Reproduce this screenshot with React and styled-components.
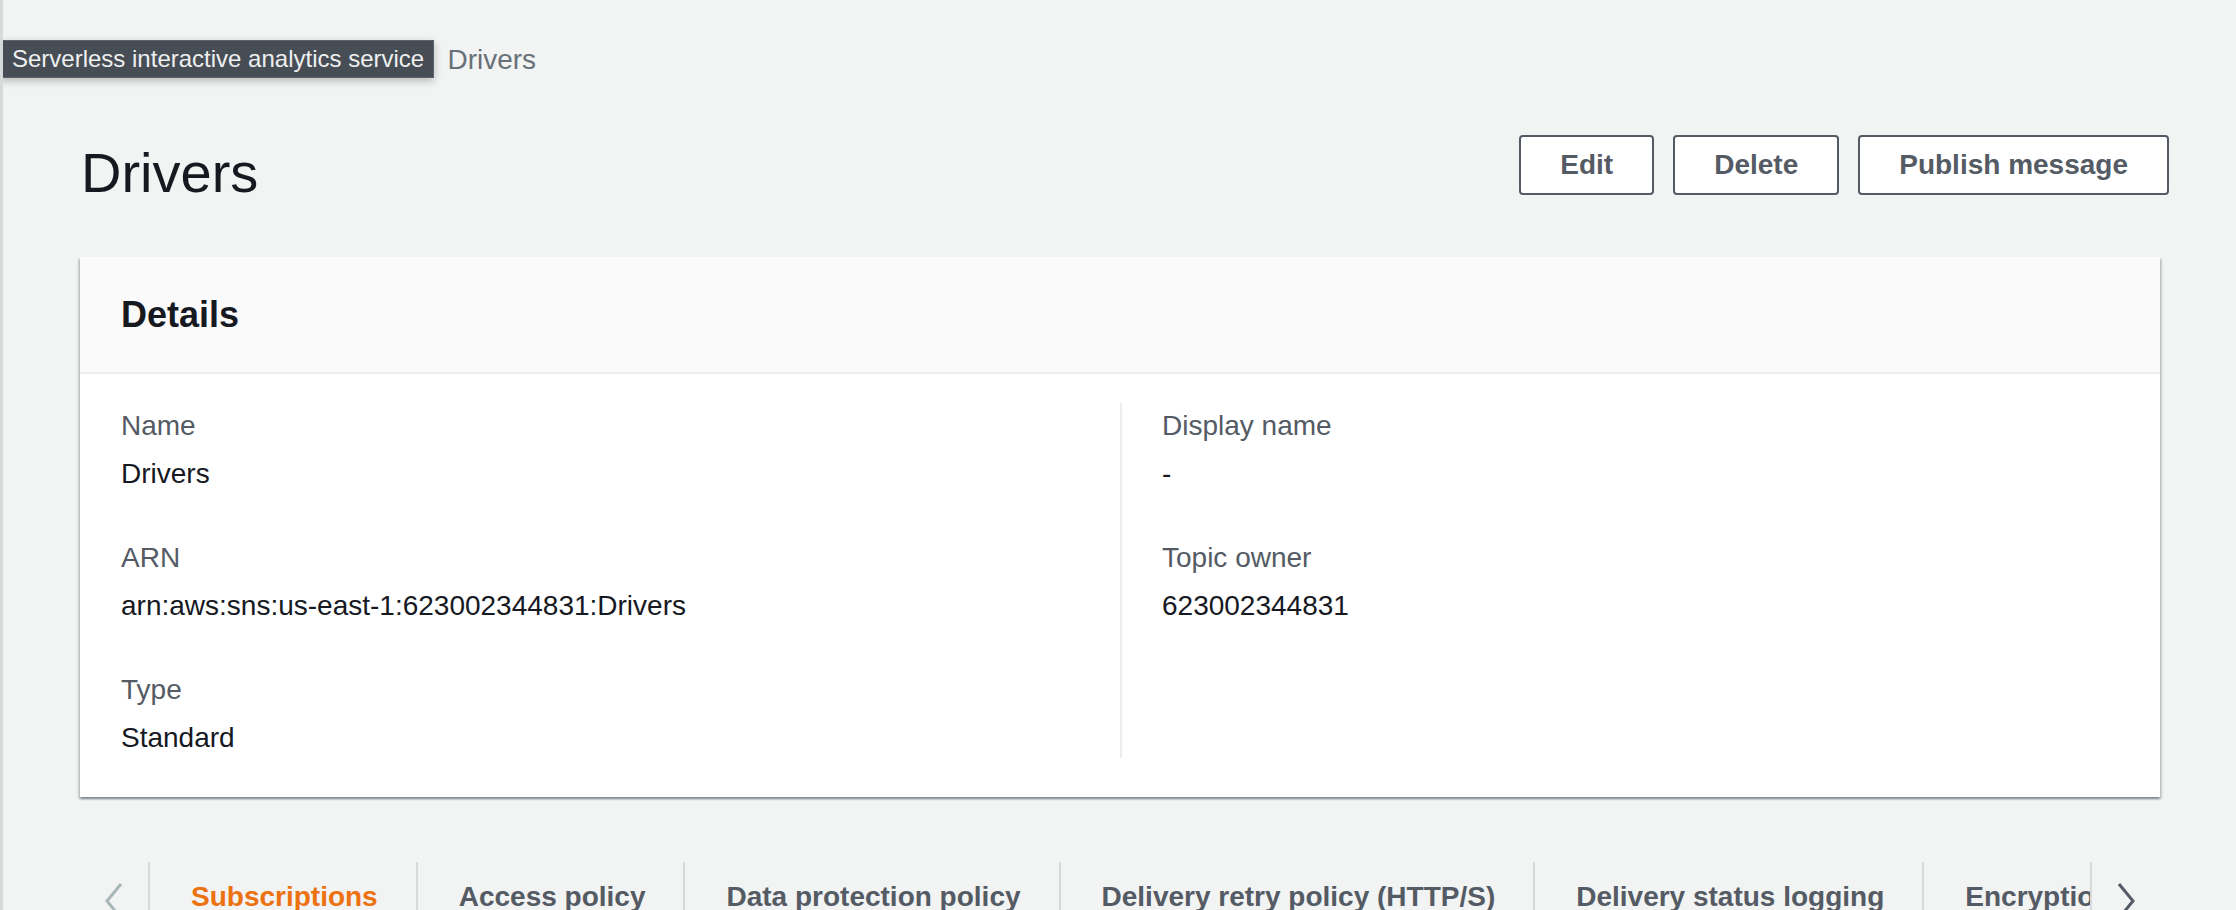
import React from 'react';
import styled, { createGlobalStyle } from 'styled-components';

const GlobalStyle = createGlobalStyle`
  html, body {
    margin: 0;
    padding: 0;
    background: #f2f3f3;
  }
  body {
    font-family: "Liberation Sans", Arial, sans-serif;
    color: #16191f;
  }
`;

const Page = styled.div`
  position: relative;
  min-height: 910px;
  box-sizing: border-box;
  background: #f2f3f3;
  border-left: 3px solid #d5dbdb;
  padding: 40px 67px 0 77px;
  overflow: hidden;
`;

const Tooltip = styled.div`
  position: absolute;
  left: -3px;
  top: 40px;
  width: 434px;
  height: 38px;
  box-sizing: border-box;
  display: flex;
  align-items: center;
  padding-left: 11px;
  background: #474d55;
  border: 1px solid #5c636c;
  color: #eef0f0;
  font-size: 24px;
  white-space: nowrap;
  box-shadow: 0 3px 8px rgba(0, 0, 0, 0.25);
  z-index: 2;
`;

const Breadcrumbs = styled.nav`
  display: flex;
  align-items: center;
  gap: 24px;
  height: 40px;
  font-size: 28px;
  color: #687078;
`;

const Crumb = styled.span`
  color: ${(p) => (p.$current ? '#687078' : '#0073bb')};
  white-space: nowrap;
`;

const Separator = styled.span`
  display: flex;
  width: 12px;
  color: #687078;
`;

const HeaderRow = styled.div`
  display: flex;
  justify-content: space-between;
  align-items: flex-start;
  margin-top: 55px;
`;

const Title = styled.h1`
  margin: 0 0 0 1px;
  font-size: 56px;
  line-height: 76px;
  font-weight: 400;
  color: #16191f;
`;

const Actions = styled.div`
  display: flex;
  gap: 19px;
`;

const Button = styled.button`
  height: 60px;
  padding: 0 39px;
  background: #ffffff;
  border: 2px solid #545b64;
  border-radius: 4px;
  color: #545b64;
  font-family: "Liberation Sans", Arial, sans-serif;
  font-size: 28px;
  font-weight: 700;
  cursor: pointer;
`;

const Card = styled.section`
  margin: 46px 9px 0 0;
  background: #ffffff;
  box-shadow: 0 2px 2px 0 rgba(0, 28, 36, 0.3),
    2px 2px 2px 0 rgba(0, 28, 36, 0.15),
    -2px 2px 2px 0 rgba(0, 28, 36, 0.15);
`;

const CardHeader = styled.div`
  height: 115px;
  display: flex;
  align-items: center;
  padding: 0 41px;
  background: #fafafa;
  border-bottom: 2px solid #eaeded;
`;

const CardTitle = styled.h2`
  margin: 0;
  font-size: 36px;
  line-height: 44px;
  font-weight: 700;
  color: #16191f;
`;

const CardBody = styled.div`
  display: grid;
  grid-template-columns: 1fr 1fr;
  padding: 29px 41px 39px;
`;

const Column = styled.div`
  display: flex;
  flex-direction: column;
  gap: 44px;
  padding-top: 3px;
  padding-left: ${(p) => (p.$divided ? '40px' : '0')};
  border-left: ${(p) => (p.$divided ? '2px solid #eaeded' : 'none')};
  min-height: 355px;
  box-sizing: border-box;
`;

const Field = styled.div`
  display: flex;
  flex-direction: column;
  gap: 8px;
`;

const Label = styled.div`
  font-size: 28px;
  line-height: 40px;
  color: #545b64;
`;

const Value = styled.div`
  font-size: 28px;
  line-height: 40px;
  color: #16191f;
`;

const TabsBar = styled.div`
  display: flex;
  align-items: stretch;
  margin: 65px 9px 0 0;
  height: 70px;
`;

const ScrollButton = styled.button`
  width: 68px;
  display: flex;
  justify-content: center;
  padding: 20px 0 0;
  background: none;
  border: none;
  color: ${(p) => (p.$disabled ? '#aab7b8' : '#545b64')};
  cursor: pointer;
`;

const TabList = styled.div`
  flex: 1;
  display: flex;
  overflow: hidden;
  border-left: 2px solid #d5dbdb;
  border-right: 2px solid #d5dbdb;
`;

const Tab = styled.div`
  flex-shrink: 0;
  padding: 15px 38px 0 41px;
  font-size: 28px;
  line-height: 40px;
  font-weight: 700;
  white-space: nowrap;
  color: ${(p) => (p.$active ? '#ec7211' : '#545b64')};
  & + & {
    border-left: 2px solid #d5dbdb;
  }
`;

const Chevron = ({ dir }) => (
  <svg width="20" height="38" viewBox="0 0 20 38" fill="none" stroke="currentColor" strokeWidth="3">
    {dir === 'left' ? <polyline points="17,2 3,19 17,36" /> : <polyline points="3,2 17,19 3,36" />}
  </svg>
);

const SmallChevron = () => (
  <svg width="12" height="20" viewBox="0 0 12 20" fill="none" stroke="currentColor" strokeWidth="2.5">
    <polyline points="2,2 10,10 2,18" />
  </svg>
);

const leftFields = [
  { label: 'Name', value: 'Drivers' },
  { label: 'ARN', value: 'arn:aws:sns:us-east-1:623002344831:Drivers' },
  { label: 'Type', value: 'Standard' },
];

const rightFields = [
  { label: 'Display name', value: '-' },
  { label: 'Topic owner', value: '623002344831' },
];

const tabs = [
  'Subscriptions',
  'Access policy',
  'Data protection policy',
  'Delivery retry policy (HTTP/S)',
  'Delivery status logging',
  'Encryption',
  'Tags',
  'Integrations',
];

export default function App() {
  return (
    <>
      <GlobalStyle />
      <Page>
        <Tooltip>Serverless interactive analytics service</Tooltip>

        <Breadcrumbs>
          <Crumb>Amazon SNS</Crumb>
          <Separator><SmallChevron /></Separator>
          <Crumb>Topics</Crumb>
          <Separator><SmallChevron /></Separator>
          <Crumb $current>Drivers</Crumb>
        </Breadcrumbs>

        <HeaderRow>
          <Title>Drivers</Title>
          <Actions>
            <Button>Edit</Button>
            <Button>Delete</Button>
            <Button>Publish message</Button>
          </Actions>
        </HeaderRow>

        <Card>
          <CardHeader>
            <CardTitle>Details</CardTitle>
          </CardHeader>
          <CardBody>
            <Column>
              {leftFields.map((f) => (
                <Field key={f.label}>
                  <Label>{f.label}</Label>
                  <Value>{f.value}</Value>
                </Field>
              ))}
            </Column>
            <Column $divided>
              {rightFields.map((f) => (
                <Field key={f.label}>
                  <Label>{f.label}</Label>
                  <Value>{f.value}</Value>
                </Field>
              ))}
            </Column>
          </CardBody>
        </Card>

        <TabsBar>
          <ScrollButton $disabled aria-label="Scroll left">
            <Chevron dir="left" />
          </ScrollButton>
          <TabList>
            {tabs.map((t, i) => (
              <Tab key={t} $active={i === 0}>{t}</Tab>
            ))}
          </TabList>
          <ScrollButton aria-label="Scroll right">
            <Chevron dir="right" />
          </ScrollButton>
        </TabsBar>
      </Page>
    </>
  );
}
